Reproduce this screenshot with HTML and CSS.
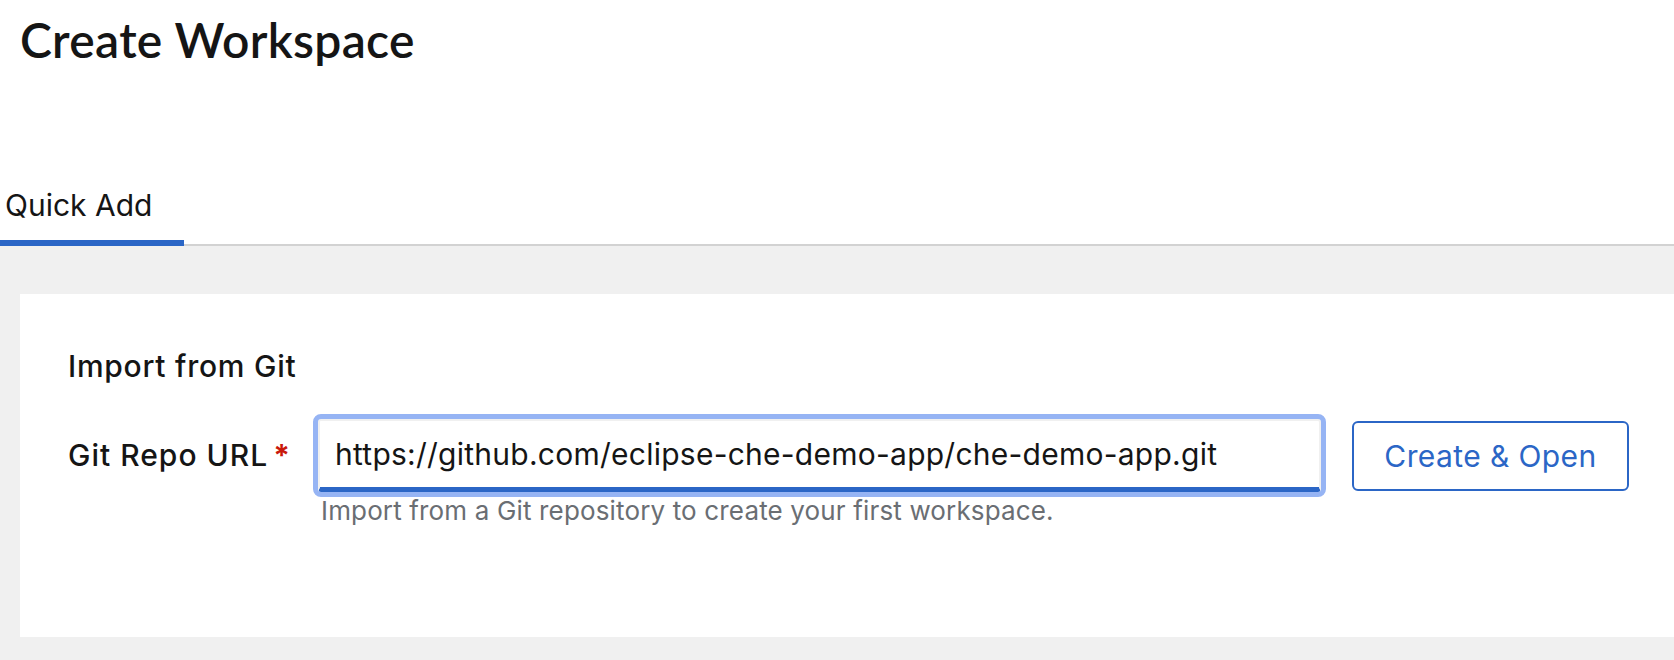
FILE: index.html
```html
<!DOCTYPE html>
<html lang="en">
<head>
<meta charset="utf-8">
<title>Create Workspace</title>
<link rel="stylesheet" href="styles.css">
</head>
<body>
<div class="page">
  <header class="page-header">
    <h1 class="page-title">Create Workspace</h1>
  </header>
  <nav class="tabs">
    <div class="tab tab-active">Quick Add</div>
  </nav>
  <main class="content">
    <section class="card">
      <h2 class="card-title">Import from Git</h2>
      <div class="form-grid">
        <label class="form-label" for="repo">Git Repo URL<span class="required">*</span></label>
        <input class="text-input" id="repo" type="text" value="https://github.com/eclipse-che-demo-app/che-demo-app.git">
        <button class="btn-secondary" type="button">Create &amp; Open</button>
        <div class="helper-text">Import from a Git repository to create your first workspace.</div>
      </div>
    </section>
  </main>
</div>
</body>
</html>
```

FILE: styles.css
```css
html, body {
  margin: 0;
  padding: 0;
  background: #ffffff;
}

body {
  font-family: Inter, "Noto Sans", "Liberation Sans", sans-serif;
  color: #151515;
  overflow: hidden;
}

.page {
  width: 1674px;
  height: 660px;
  display: flex;
  flex-direction: column;
}

.page-header {
  padding: 12px 20px 0;
  height: 163px;
  box-sizing: border-box;
}

.page-title {
  margin: 0;
  font-family: Lato, "Liberation Sans", sans-serif;
  font-weight: 600;
  font-size: 48px;
  letter-spacing: 0.3px;
  line-height: 55px;
  color: #151515;
}

.tabs {
  display: flex;
  align-items: flex-end;
  border-bottom: 2px solid #d2d2d2;
  padding-top: 12px;
}

.tab {
  padding: 12px 32px 17px 5px;
  font-size: 30px;
  line-height: 36px;
  color: #151515;
}

.tab-active {
  border-bottom: 6px solid #2b66c6;
  margin-bottom: -2px;
}

.content {
  flex: 1;
  background: #f0f0f0;
  padding: 48px 0 23px 20px;
  display: flex;
  flex-direction: column;
}

.card {
  flex: 1;
  background: #ffffff;
  padding: 55px 0 0 48px;
}

.card-title {
  margin: 0 0 35px;
  font-size: 30px;
  letter-spacing: 0.75px;
  line-height: 35px;
  font-weight: 500;
  color: #151515;
}

.form-grid {
  display: grid;
  grid-template-columns: 250px 1003px 308px;
  grid-template-rows: 73px auto;
  align-items: center;
}

.form-label {
  font-size: 30px;
  font-weight: 500;
  letter-spacing: 1px;
  line-height: 35px;
  color: #151515;
}

.required {
  color: #c9190b;
  margin-left: 5px;
  font-weight: 700;
}

.text-input {
  box-sizing: border-box;
  width: 1003px;
  height: 73px;
  margin: 0;
  padding: 0 15px;
  border: 2px solid #f0f0f0;
  border-bottom: 5px solid #2b66c6;
  border-radius: 3px;
  outline: 5px solid #96b4f4;
  outline-offset: 0;
  font-family: Inter, "Noto Sans", sans-serif;
  font-size: 30px;
  letter-spacing: 0.25px;
  color: #151515;
  background: #ffffff;
}

.btn-secondary {
  justify-self: start;
  margin-left: 31px;
  box-sizing: border-box;
  width: 277px;
  height: 70px;
  padding: 0;
  border: 2px solid #2b66c6;
  border-radius: 6px;
  background: #ffffff;
  color: #2b66c6;
  font-family: Inter, "Noto Sans", sans-serif;
  font-size: 30px;
  letter-spacing: 0.4px;
  cursor: pointer;
}

.helper-text {
  grid-column: 2 / 4;
  margin-top: 4px;
  padding-left: 3px;
  font-size: 26px;
  letter-spacing: 0.15px;
  line-height: 30px;
  color: #6a6e73;
}
```
